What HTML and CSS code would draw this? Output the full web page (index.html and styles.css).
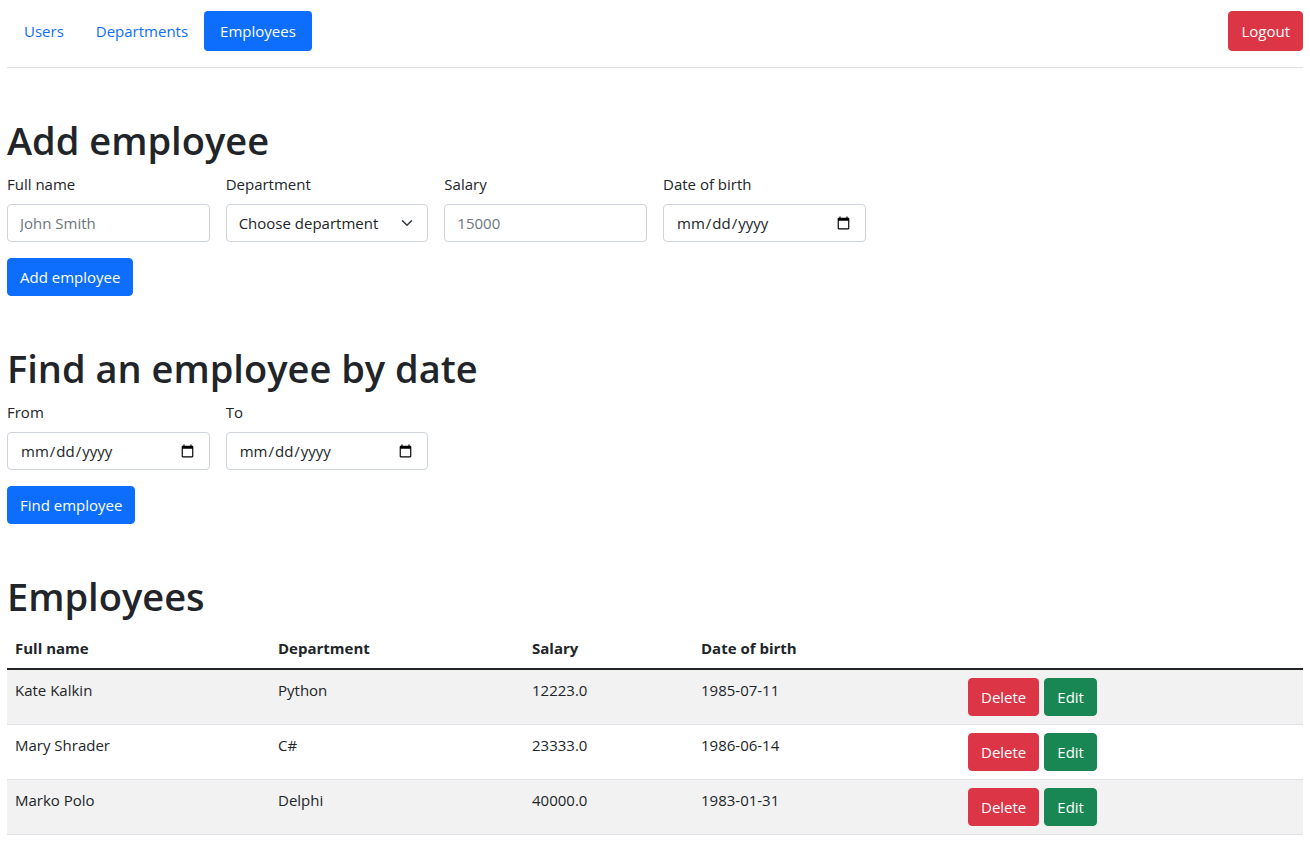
FILE: index.html
```html
<!DOCTYPE html>
<html lang="en">
<head>
<meta charset="utf-8">
<title>Employees</title>
<link rel="stylesheet" href="styles.css">
</head>
<body>
<div class="page">
  <header class="topbar">
    <nav class="nav">
      <a class="nav-link" href="#">Users</a>
      <a class="nav-link" href="#">Departments</a>
      <a class="nav-link active" href="#">Employees</a>
    </nav>
    <button class="btn btn-danger logout">Logout</button>
  </header>

  <section class="section first">
    <h1>Add employee</h1>
    <div class="form-grid">
      <div class="field">
        <label>Full name</label>
        <input class="control" type="text" placeholder="John Smith">
      </div>
      <div class="field">
        <label>Department</label>
        <div class="select-wrap">
          <select class="control select">
            <option>Choose department</option>
          </select>
          <svg class="chevron" viewBox="0 0 16 16"><path d="M2 5l6 6 6-6" fill="none" stroke="#343a40" stroke-width="2" stroke-linecap="round" stroke-linejoin="round"/></svg>
        </div>
      </div>
      <div class="field">
        <label>Salary</label>
        <input class="control" type="text" placeholder="15000">
      </div>
      <div class="field">
        <label>Date of birth</label>
        <input class="control" type="date">
      </div>
    </div>
    <button class="btn btn-primary action">Add employee</button>
  </section>

  <section class="section">
    <h1>Find an employee by date</h1>
    <div class="form-grid">
      <div class="field">
        <label>From</label>
        <input class="control" type="date">
      </div>
      <div class="field">
        <label>To</label>
        <input class="control" type="date">
      </div>
    </div>
    <button class="btn btn-primary action">Find employee</button>
  </section>

  <section class="section">
    <h1>Employees</h1>
    <table class="table">
      <thead>
        <tr>
          <th class="c1">Full name</th>
          <th class="c2">Department</th>
          <th class="c3">Salary</th>
          <th class="c4">Date of birth</th>
          <th></th>
        </tr>
      </thead>
      <tbody>
        <tr>
          <td>Kate Kalkin</td><td>Python</td><td>12223.0</td><td>1985-07-11</td>
          <td><div class="actions"><button class="btn btn-danger">Delete</button><button class="btn btn-success">Edit</button></div></td>
        </tr>
        <tr>
          <td>Mary Shrader</td><td>C#</td><td>23333.0</td><td>1986-06-14</td>
          <td><div class="actions"><button class="btn btn-danger">Delete</button><button class="btn btn-success">Edit</button></div></td>
        </tr>
        <tr>
          <td>Marko Polo</td><td>Delphi</td><td>40000.0</td><td>1983-01-31</td>
          <td><div class="actions"><button class="btn btn-danger">Delete</button><button class="btn btn-success">Edit</button></div></td>
        </tr>
      </tbody>
    </table>
  </section>
</div>
</body>
</html>
```

FILE: styles.css
```css
* { box-sizing: border-box; }
html, body { margin: 0; padding: 0; background: #fff; }
body {
  font-family: "Open Sans", "Noto Sans", sans-serif;
  font-size: 15px;
  line-height: 24px;
  color: #212529;
}
.page { padding: 11px 7px 0 7px; }

.topbar {
  display: flex;
  justify-content: space-between;
  align-items: stretch;
  padding: 0 0 16px 0;
  border-bottom: 1px solid #dee2e6;
}
.nav { display: flex; padding-left: 1px; }
.nav-link {
  display: block;
  padding: 8px 16px;
  color: #0d6efd;
  text-decoration: none;
  border-radius: 4px;
  line-height: 24px;
}
.nav-link.active { background: #0d6efd; color: #fff; }

.btn {
  display: inline-block;
  font-family: inherit;
  font-size: 15px;
  line-height: 24px;
  padding: 6px 12px;
  border: 1px solid transparent;
  border-radius: 4px;
  color: #fff;
  cursor: pointer;
}
.logout { height: 40px; }
.btn-primary { background: #0d6efd; border-color: #0d6efd; }
.btn-danger { background: #dc3545; border-color: #dc3545; }
.btn-success { background: #198754; border-color: #198754; }

.section { padding-top: 48px; }
.section.first { padding-top: 48px; }
h1 {
  margin: 0 0 8px 0;
  font-size: 38px;
  line-height: 48px;
  font-weight: 600;
}
.form-grid {
  display: grid;
  grid-template-columns: repeat(6, 1fr);
  column-gap: 16px;
}
.field label { display: block; margin-bottom: 8px; line-height: 24px; }
.control {
  display: block;
  width: 100%;
  height: 38px;
  padding: 6px 12px;
  font-family: inherit;
  font-size: 15px;
  line-height: 24px;
  color: #212529;
  background: #fff;
  border: 1px solid #ced4da;
  border-radius: 4px;
  outline: none;
}
.control::placeholder { color: #6c757d; }
.select-wrap { position: relative; }
.select { appearance: none; -webkit-appearance: none; padding-right: 36px; }
.chevron { position: absolute; right: 15px; top: 13px; width: 12px; height: 12px; pointer-events: none; }
.action { margin-top: 16px; }

.table {
  width: 100%;
  border-collapse: collapse;
  margin-top: 0;
}
.table th, .table td {
  padding: 8px;
  text-align: left;
  vertical-align: top;
  border-bottom: 1px solid #dee2e6;
}
.table th { font-weight: 700; border-bottom: 2px solid #212529; }
.table tbody tr:nth-child(odd) td { background: #f2f2f2; }
.c1 { width: 263px; }
.c2 { width: 254px; }
.c3 { width: 169px; }
.c4 { width: 267px; }
.actions { display: flex; gap: 5px; }
```
